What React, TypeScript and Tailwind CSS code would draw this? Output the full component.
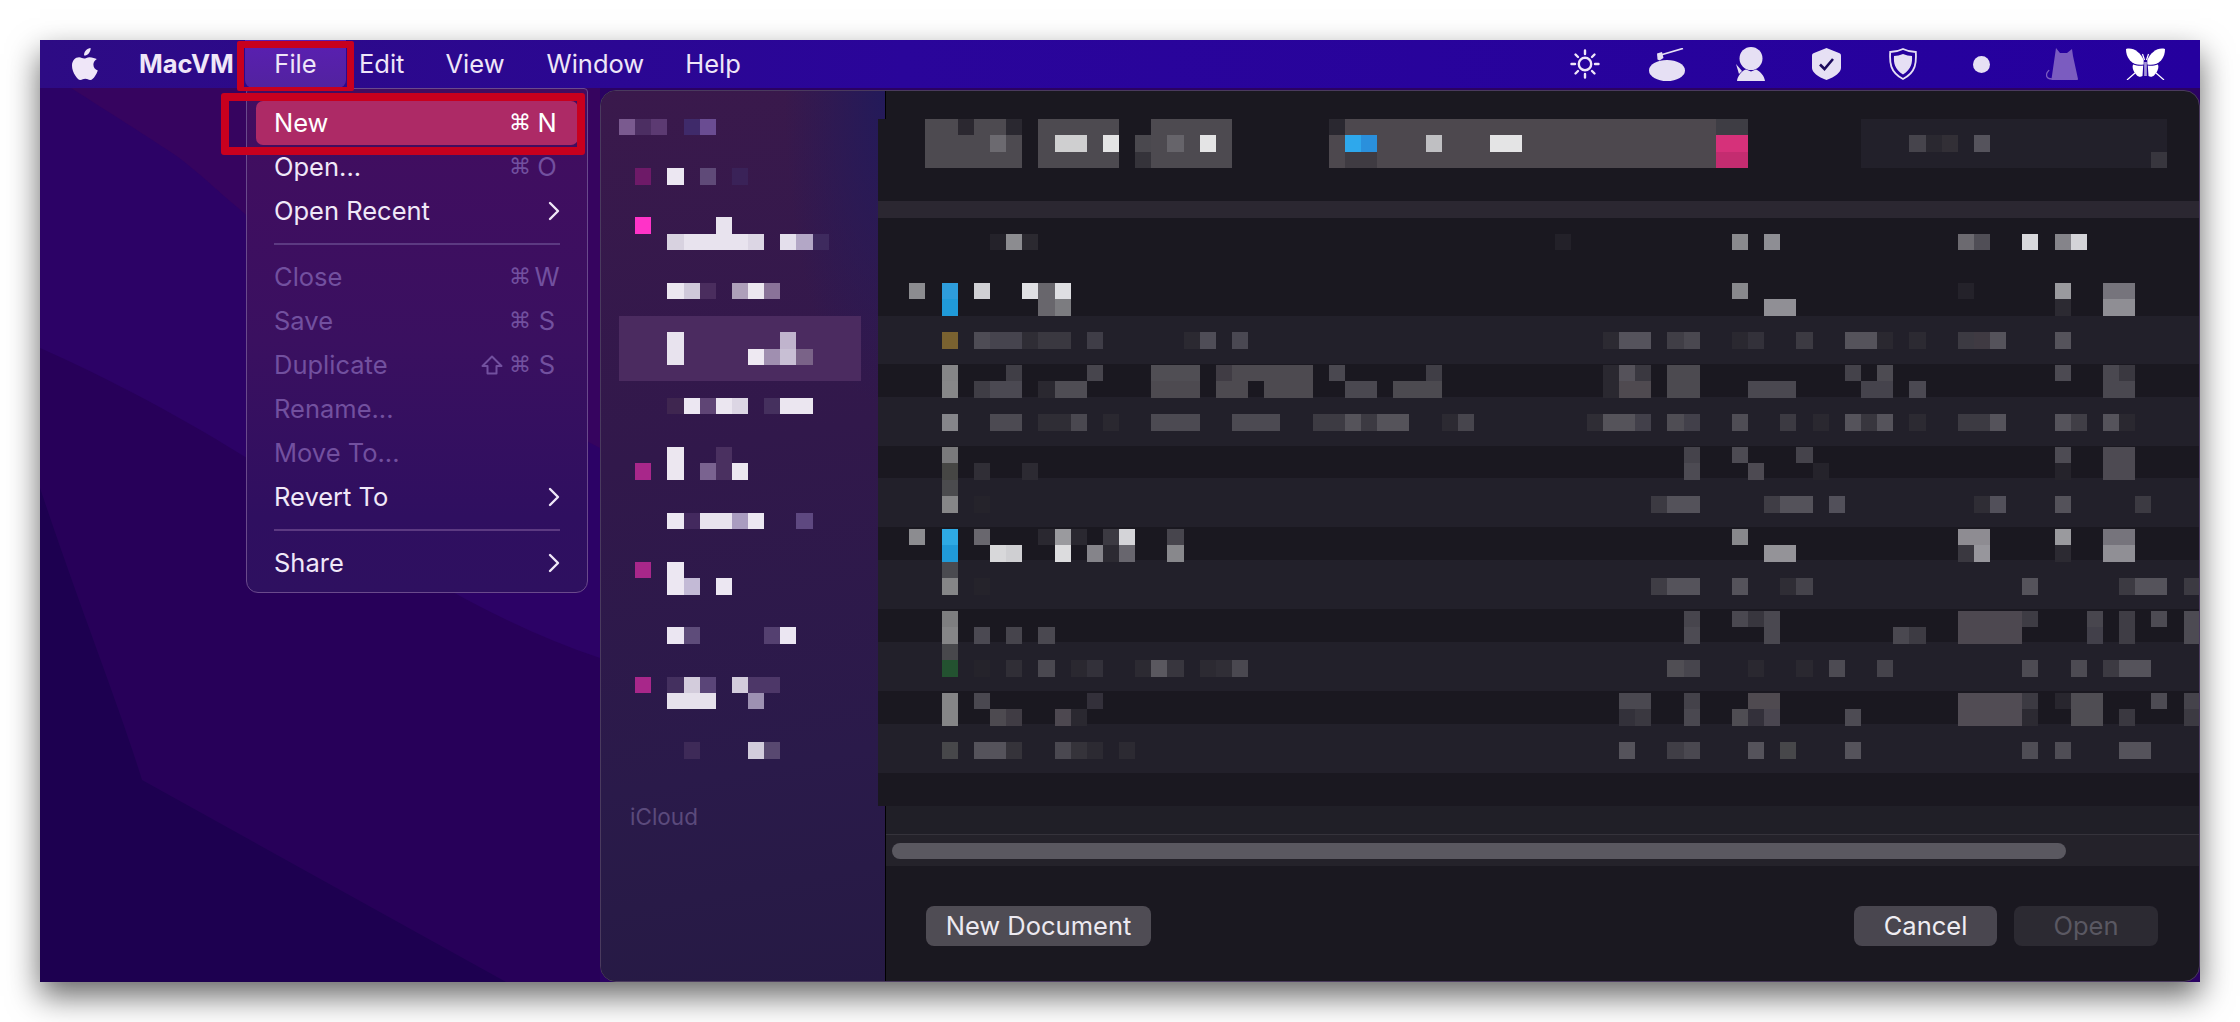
import React from "react";

const SANS = "font-['Inter','Liberation_Sans',sans-serif]";

// Pixelated (censored) blocks of the reference: row -> "col[-col]:hex" list.
const MOSAIC: [number, string][] = [
  // sidebar
  [0, "0:7a5a8f 1:4c2e62 2:5c3a72 4:3f2a6a 5:6a4c92"],
  [3, "1:6e1a68 3:ece7f2 5:5f4a78 7:3a2258"],
  [6, "1:ff33c8 6:e8e3ee"],
  [7, "3:d8d2e0 4-7:e8e3ee 8:dcd6e4 10:e4dfec 11:b3a7c6 12:3e2a5e"],
  [10, "3:ebe6f0 4:cfc8da 5:4a2d5e 7:ae9fba 8:ece7f0 9:8a7399"],
  [13, "3:e8e3ee 10:c0b4cd"],
  [14, "3:e8e3ee 8:eee9f2 9:a08fb0 10:c8bfd4 11:7a6388"],
  [17, "3:3f2650 4:ece7f2 5:5f4575 6:ebe6f0 7:dcd6e4 9:45305e 10-11:ebe6f0"],
  [20, "3:ece7f0 6:4a3060"],
  [21, "1:a8278a 3:ece7f0 5:7a6390 6:4a3060 7:ece7f0"],
  [24, "3:ece7f2 4:43295e 5-6:e8e3ee 7:a99cc0 8:ece7f2 11:5e4880"],
  [27, "1:a8278a 3:ece7f2"],
  [28, "3:ece7f2 4:c3bad6 6:ece7f2"],
  [31, "3:ebe6f2 4:5e4c7a 9:544070 10:ebe6f2"],
  [34, "1:a8278a 3:44305f 4:d3ccdc 5:5a4578 7:d3ccdc 8-9:4d3768"],
  [35, "3-5:e6e1ec 8:9d91b2"],
  [38, "4:3e2a58 8:d2ccdc 9:584870"],
  // toolbar
  [0, "19-20:4d4a50 21:2b2830 22-23:4d4a50 24:2a2830 26-30:4d4a50 33-37:4d4a50 44:2a2830 45-67:4d484e 68-69:3e3d44 77-95:22202a"],
  [1, "19-22:4d4a50 23:6c6a70 24:4d4a50 26:4d4a50 27-28:cfcfd0 29:4d4a50 30:e4e4e5 32:4a484e 33:4d4a50 34:66646a 35:4d4a50 36:e4e4e5 37:4d4a50 44:4d484e 45:2ea8ec 46:2a90dc 47-49:4d484e 50:bfbfc2 51-53:4d484e 54-55:e4e4e5 56-67:4d484e 68-69:d6317a 77-79:22202a 80:46444c 81:2a2830 82:322f36 83:22202a 84:55535c 85-95:22202a"],
  [2, "19-24:4d4a50 26-30:4d4a50 32:35333a 33-37:4d4a50 44:4d484e 45-46:3f3b42 47-67:4d484e 68-69:c42c70 77-94:22202a 95:38363e"],
  // table
  [7, "23:24222a 24:8c8c90 25:2b2930 58:232129 69:8a8a8e 71:8e8e94 83:6c6a70 84:504e56 87:d8d8dc 89:85848a 90:d4d4d8"],
  [10, "18:8c8c90 20:2e9ddc 22:d0d0d4 25:e0e0e4 26:68666c 27:dedee2 69:88888c 83:24222a 89:9a9a9e 92-93:76747c"],
  [11, "20:209ad8 26:68666c 27:7c7c80 71-72:908f95 89:2c2a32 92-93:8f8e94"],
  [13, "20:7a6230 22:4e4c55 23-24:46444e 25:2f2d35 26-27:3a3840 29:3f3d47 35:2b2931 36:4f4d57 38:4a4852 61:2c2a32 62-63:55535c 65:403e46 66:4a4850 69:2a2830 70:33313a 73:3c3a42 76-77:55535b 78:2a2830 80:2c2a32 83:3c3a42 84:3f3a42 85:55535b 89:55535b"],
  [15, "20:858587 24:403e46 29:47454d 33-35:504e54 37:403c44 38-42:4d4a50 44:4a4850 50:403e46 61:2a2830 62:55525a 63:3a3840 65-66:4c4a50 76:44424a 78:4d4b52 89:4c4a52 92:4a4850 93:3a3840"],
  [16, "20:878789 22:3f3d45 23-24:4b4952 26:2a2830 27-28:4f4d54 33-35:4d4a50 37-38:4d4a50 40-42:4d4a50 45-46:4a4850 48-50:4c4a50 61:2a2830 62-63:4f4a50 65-66:4c4a50 70-72:4a4850 77-78:45434c 80:4b4952 92-93:4a4850"],
  [18, "20:85858a 23-24:4c4a52 26-27:2f2d35 28:4a4850 30:2a2830 33-35:4c4a52 38-40:4c4a52 43-44:3d3b43 45:55535a 46:3c3a42 47-48:55535a 51:2c2a32 52:47454d 60:2f2d35 61-62:55535a 63:42404a 65:4f4d54 66:42404a 69:4f4d55 72:3c3a42 74:2a2830 76:55535b 77:38363e 78:55535b 80:2c2a32 83-84:3c3a42 85:55535b 89:55535b 90:403e46 92:55535b 93:2a2830"],
  [20, "20:7a7a7c 66:45434b 69:4d4b53 73:45434b 89:4d4b53 92-93:4d4a52"],
  [21, "20:464644 22:302e36 25:2c2a32 66:4d4b53 70:4d4a52 74:25232b 89:25232b 92-93:4d4a52"],
  [22, "20:4b4b4e"],
  [23, "20:868688 22:25232b 64:3c3a42 65-66:54525a 71:3f3d45 72-73:54525a 75:52505a 84:2f2d35 85:52505a 89:54525a 94:3c3a42"],
  [25, "18:8c8c90 20:2eaae4 22:69676e 26:2a2830 27:9a9a9e 28:2a2830 30:3c3a42 31:d4d4d8 34:47454d 69:88888c 83-84:8e8c92 89:9a9a9e 92-93:76747c"],
  [26, "20:209ad8 23:d8d8da 24:cfcfd2 27:dcdcde 29:85848a 30:2c2a32 31:68666e 34:88888c 71-72:949398 83:3a3840 84:97969c 89:2c2a32 92-93:908f95"],
  [27, "20:4a4a50"],
  [28, "20:858587 22:25232b 64:3f3d45 65-66:55535b 69:55535b 72:2f2d35 73:45434b 87:55535b 93:3c3a42 94-95:55535b 97-98:3c3a42"],
  [30, "20:7e7e80 66:47454d 69:4a4850 70:38363e 71:4a4850 83-86:4d4850 87:3e3c44 91:48464e 93:3f3d45 95:4d4b53 97:4d4b53"],
  [31, "20:858587 22:4b4952 24:46444c 26:4a4850 66:4d4b53 71:4a4850 79:4a4850 80:3d3b43 83-86:4d4850 91:42404a 93:3f3d45 97:4d4b53"],
  [32, "20:48484c"],
  [33, "20:235230 22:25232b 24:302e36 26:4a4850 28:2a2830 29:33313a 32:2c2a32 33:5a585f 34:38363e 36:2c2a32 37:302e36 38:4a4850 65:504e54 66:47454d 70:2a2830 73:2a2830 75:4d4b53 78:45434b 87:4d4b53 90:4d4b53 92:3c3a42 93-94:55535b"],
  [35, "20:858587 22:4a4850 29:33303a 62-63:4a4850 66:44424a 70-71:4f4a50 83-86:514c54 87:3c3a42 89:28262e 90-91:4f4d53 95:4d4b53 97:45434b"],
  [36, "20:858587 23:4d4a50 24:403c44 27:4d4850 28:2a2830 62:33313a 63:3a3840 66:4a4850 69:4f4d53 70:33303a 71:4a4650 76:4d4b53 83-86:514c54 87:2c2a32 90-91:4f4d53 93:3a3840 97:3c3a42"],
  [38, "20:47474a 22-23:55535b 24:35333a 27:4a4850 28:35333a 29:2c2a32 31:2c2a32 62:55535b 65:403e46 66:4a4850 70:55535b 72:47474a 76:55535b 87:4f4d55 89:4f4d55 93-94:55535b"],
];

function Mosaic() {
  const rects: React.ReactNode[] = [];
  MOSAIC.forEach(([row, spec], i) => {
    spec.split(" ").forEach((part, j) => {
      const [range, hex] = part.split(":");
      const [a, b] = range.split("-").map(Number);
      const end = b === undefined ? a : b;
      const x = 619 + a * 16.13;
      const right = Math.min(x + (end - a + 1) * 16.13, 2199);
      rects.push(<rect key={`${i}-${j}`} x={x} y={119 + row * 16.4} width={right - x} height={16.4} fill={`#${hex}`} />);
    });
  });
  return (
    <svg className="absolute left-0 top-0 pointer-events-none" width={2240} height={1022} viewBox="0 0 2240 1022" shapeRendering="crispEdges">
      {rects}
    </svg>
  );
}

const Apple = () => (
  <svg width="26" height="32" viewBox="0 0 26 32" fill="#efe6f8">
    <path d="M18.6 0c.2 2-.6 3.900-1.700 5.200-1.200 1.400-3 2.500-4.800 2.400-.3-1.900.6-3.900 1.700-5.100C15 1.100 17 .1 18.600 0zM24.800 11c-2.300 1.400-3.400 3.200-3.400 5.600 0 2.800 1.600 4.900 4.400 6-.7 2-1.600 3.800-2.900 5.600-1.400 1.900-2.700 3.800-4.700 3.800-2 0-2.600-1.200-4.900-1.200-2.300 0-3 1.200-4.900 1.200-2 0-3.400-2.100-4.800-4.100C1.200 24.700 0 20.900 0 17.700 0 12.600 3.300 9.300 7.100 9.300c2 0 3.700 1.300 5 1.300 1.200 0 3.100-1.400 5.400-1.400 2.900 0 5.400 1.100 7.300 1.800z" />
  </svg>
);

const Sun = () => (
  <svg width="30" height="30" viewBox="0 0 30 30" fill="none" stroke="#efe6f8" strokeWidth="2.400" strokeLinecap="round">
    <circle cx="15" cy="15" r="6.200" />
    <path d="M15 1.500v3.500M15 25v3.500M1.500 15H5M25 15h3.500M5.500 5.500L8 8M22 22l2.500 2.500M5.500 24.500L8 22M22 8l2.500-2.500" />
  </svg>
);

const Honey = () => (
  <svg width="36" height="33" viewBox="0 0 36 33" fill="#e6e0f4">
    <ellipse cx="18" cy="22.500" rx="18" ry="10.500" />
    <path d="M10 7.500L34 0.500" stroke="#e6e0f4" strokeWidth="1.800" fill="none" />
    <path d="M8 5.500l5-1.500 1.500 6-4 2.500-2-1z" />
  </svg>
);

const Person = () => (
  <svg width="29" height="34" viewBox="0 0 29 34" fill="#e6e0f4">
    <circle cx="15" cy="11.500" r="11.500" />
    <path d="M1 34c.5-5 5-10.500 9-11.500l5 2 5-2c4 1.500 8.500 6.500 9 11.500z" />
    <path d="M0 17l6 7-3 3z" />
  </svg>
);

const ShieldCheck = () => (
  <svg width="29" height="32" viewBox="0 0 29 32" fill="none">
    <path d="M14.500 0L27 5c1.500.6 2 1.200 2 3v12c0 4-6 9-14.500 12C6 29 0 24 0 20V8c0-1.800.5-2.400 2-3z" fill="#e6e0f4" />
    <path d="M8 16.500l4.500 4.500L21 11" stroke="#1c0a5c" strokeWidth="2.600" />
  </svg>
);

const ShieldOutline = () => (
  <svg width="28" height="32" viewBox="0 0 28 32" fill="none">
    <path d="M14 1c4 2 8 3 12.800 3 .6 10 .6 20-12.800 27C.6 24 .6 14 1.200 4 6 4 10 3 14 1z" stroke="#e6e0f4" strokeWidth="1.800" />
    <path d="M14 6c3 1.200 6 2 9 2 .4 7-.4 13-9 18.500C5.400 21 4.600 15 5 8c3 0 6-.8 9-2z" fill="#e6e0f4" />
  </svg>
);

const Cat = () => (
  <svg width="32" height="32" viewBox="0 0 32 32" fill="#7b5cc0">
    <path d="M10 0l4 5h7l5-4 1 7 5 23c0 .6-.5 1-1 1H6.500c-.5 0-1-.4-1-1z" />
    <path d="M6 31c-3 0-5.500-1-5.500-4s2-3.500 2.500-5" fill="none" stroke="#7b5cc0" strokeWidth="1.300" />
  </svg>
);

const Butterfly = () => (
  <svg width="41" height="32" viewBox="0 0 41 32" fill="#ffffff">
    <path d="M1 1C8-1 15 4 18.700 12V16.500C13 17.500 8 16 5 12.500 2 9 1 5 1 1z" />
    <path d="M40 1C33-1 26 4 22.300 12V16.500C28 17.500 33 16 36 12.500 39 9 40 5 40 1z" />
    <path d="M8 16.500C12 18 16 18 18.200 17.500L17.500 28C15.500 29.500 13 28.500 12 27.500L9.500 24.500C8 22 7 19 8 16.500z" />
    <path d="M33 16.500C29 18 25 18 22.800 17.500L23.500 28C25.500 29.500 28 28.500 29 27.500L31.500 24.500C33 22 34 19 33 16.500z" />
    <path d="M19.500 14h.8v14h-.8zM20.700 14h.8v14h-.8z" />
    <path d="M10 25L2 32M31 25l8 7M19.500 12L17.500 6M21.500 12L23.500 6" stroke="#ffffff" strokeWidth="1.200" fill="none" />
  </svg>
);

const Chevron = () => (
  <svg width="12" height="20" viewBox="0 0 12 20" fill="none" stroke="#f0e8f8" strokeWidth="2.400" strokeLinecap="round" strokeLinejoin="round">
    <path d="M2 2l8 8-8 8" />
  </svg>
);

const ShiftIcon = () => (
  <svg width="22" height="20" viewBox="0 0 22 20" fill="none" stroke="#72509f" strokeWidth="2" strokeLinejoin="round">
    <path d="M11 1.500L20.500 11H15.500V18.500H6.500V11H1.500z" />
  </svg>
);

function Shortcut({ k, shift, tone }: { k: string; shift?: boolean; tone: string }) {
  return (
    <span className={`flex items-center ${tone}`}>
      {shift && <span className="mr-[6px]"><ShiftIcon /></span>}
      <span className="font-['DejaVu_Sans',sans-serif] text-[22px] leading-none">⌘</span>
      <span className="w-[26px] text-center ml-[3px]">{k}</span>
    </span>
  );
}

const ON = "text-[#f0e8f8]";
const OFF = "text-[#72509f]";

function Item({ label, off, children, active }: { label: string; off?: boolean; active?: boolean; children?: React.ReactNode }) {
  return (
    <div className={`flex h-[44px] items-center justify-between mx-[9px] px-[18px] rounded-[7px] ${active ? "bg-[#ad2a66] text-white" : off ? OFF : ON}`}>
      <span>{label}</span>
      {children}
    </div>
  );
}

const Sep = () => (
  <div className="flex h-[22px] items-center px-[27px]">
    <div className="h-[2px] w-full bg-[#5c3a82]" />
  </div>
);

function Menu() {
  return (
    <div className={`absolute left-[206px] top-[48px] w-[342px] h-[505px] pt-[12px] rounded-b-[12px] rounded-t-[4px] border border-[#6a4a8c] bg-[linear-gradient(180deg,#420d60_0%,#3a1060_50%,#2f0f60_85%,#2e1060_100%)] text-[25.5px] leading-none ${SANS}`}>
      <Item label="New" active>
        <Shortcut k="N" tone="text-white" />
      </Item>
      <Item label="Open...">
        <Shortcut k="O" tone={OFF} />
      </Item>
      <Item label="Open Recent">
        <Chevron />
      </Item>
      <Sep />
      <Item label="Close" off>
        <Shortcut k="W" tone={OFF} />
      </Item>
      <Item label="Save" off>
        <Shortcut k="S" tone={OFF} />
      </Item>
      <Item label="Duplicate" off>
        <Shortcut k="S" shift tone={OFF} />
      </Item>
      <Item label="Rename..." off />
      <Item label="Move To..." off />
      <Item label="Revert To">
        <Chevron />
      </Item>
      <Sep />
      <Item label="Share">
        <Chevron />
      </Item>
    </div>
  );
}

function MenuBar() {
  return (
    <div className={`relative z-10 flex h-[48px] shrink-0 items-center bg-[linear-gradient(90deg,#2d0b84_0%,#2a059a_40%,#25009e_100%)] text-[25.5px] text-[#efe6f8] ${SANS}`}>
      <span className="ml-[32px] w-[67px]"><Apple /></span>
      <span className="font-bold w-[93px]">MacVM</span>
      <span className="ml-[13px] flex h-[48px] w-[101px] items-center justify-center rounded-b-[8px] bg-[linear-gradient(180deg,#5a1fb2,#52229f)]">File</span>
      <span className="ml-[13px]">Edit</span>
      <span className="ml-[41px]">View</span>
      <span className="ml-[42px]">Window</span>
      <span className="ml-[41px]">Help</span>
      <div className="ml-auto mr-[34px] flex items-center">
        <Sun />
        <span className="ml-[49px]"><Honey /></span>
        <span className="ml-[51px]"><Person /></span>
        <span className="ml-[47px]"><ShieldCheck /></span>
        <span className="ml-[48px]"><ShieldOutline /></span>
        <span className="ml-[56px] h-[17px] w-[17px] rounded-full bg-[#e6e0f4]" />
        <span className="ml-[56px]"><Cat /></span>
        <span className="ml-[47px]"><Butterfly /></span>
      </div>
    </div>
  );
}

const ROWS: [number, string][] = [
  [48, "bg-[#22202a]"], [33, "bg-[#1a1820]"], [49, "bg-[#22202a]"], [32, "bg-[#1a1820]"],
  [49, "bg-[#22202a]"], [33, "bg-[#1a1820]"], [49, "bg-[#22202a]"], [33, "bg-[#1a1820]"],
  [49, "bg-[#22202a]"], [33, "bg-[#1a1820]"], [49, "bg-[#22202a]"], [33, "bg-[#1a1820]"],
];

const ROW_H: Record<number, string> = { 48: "h-[48px]", 33: "h-[33px]", 49: "h-[49px]", 32: "h-[32px]" };

function Dialog() {
  return (
    <div className="flex h-[892px] w-[1600px] overflow-hidden rounded-[16px] border border-[#4a3a5e] bg-[#1a1820]">
      <div className="relative flex w-[284px] shrink-0 flex-col bg-[radial-gradient(ellipse_at_100%_0%,#231a5a_0%,transparent_25%),linear-gradient(170deg,#3a194c_0%,#31184b_40%,#2a1a4a_75%,#261a44_100%)]">
        <div className="absolute left-[18px] top-[225px] h-[65px] w-[242px] bg-[#4b2b60]" />
        <span className={`mt-[709px] ml-[29px] text-[22.5px] text-[#5b4a7c] ${SANS}`}>iCloud</span>
      </div>
      <div className="relative flex min-w-0 flex-1 flex-col border-l border-black">
        <div className="h-[28px]" />
        <div className="-ml-[8px] flex flex-col bg-[#1a1820]">
          <div className="h-[82px]" />
          <div className="h-[17px] bg-[#2b2731]" />
          <div className="h-[98px]" />
          {ROWS.map(([h, bg], i) => (
            <div key={i} className={`${ROW_H[h]} ${bg}`} />
          ))}
        </div>
        <div className="h-[28px] bg-[#201f27]" />
        <div className="h-px bg-[#35333b]" />
        <div className="flex h-[31px] items-center bg-[#24222a] pl-[6px]">
          <div className="h-[16px] w-[1174px] rounded-full bg-[#5a5860]" />
        </div>
        <div className={`flex flex-1 items-start justify-between pl-[40px] pr-[41px] pt-[40px] text-[25.5px] ${SANS}`}>
          <button className="flex h-[40px] w-[225px] items-center justify-center rounded-[8px] bg-[#4f4c54] text-[#ece9f0]">New Document</button>
          <div className="flex gap-[17px]">
            <button className="flex h-[40px] w-[143px] items-center justify-center rounded-[8px] bg-[#49464f] text-[#efedf2]">Cancel</button>
            <button className="flex h-[40px] w-[144px] items-center justify-center rounded-[8px] bg-[#2c2a32] text-[#5a5862]">Open</button>
          </div>
        </div>
      </div>
    </div>
  );
}

export default function App() {
  return (
    <div className="relative h-[1022px] w-[2240px] overflow-hidden bg-white p-[40px]">
      <div className="relative flex h-[942px] w-[2160px] flex-col bg-[#2a0262] shadow-[0_14px_30px_rgba(0,0,0,0.6)]">
        <svg className="absolute left-0 top-[48px]" width="560" height="894" viewBox="0 0 560 894">
          <rect width="560" height="894" fill="#2c0266" />
          <path d="M31 0C70 25 110 50 138 69 165 90 180 105 197 119 300 210 440 300 560 360V0z" fill="#36045f" />
          <path d="M0 260C90 300 200 360 280 420 380 490 470 540 560 570V894H0z" fill="#270059" />
          <path d="M0 400C40 520 80 620 102 692L466 894H0z" fill="#1d0050" />
        </svg>
        <MenuBar />
        <div className="relative flex flex-1 pl-[560px] pt-[2px]">
          <Dialog />
        </div>
        <Menu />
        <div className="absolute left-[197px] top-[1px] z-20 h-[50px] w-[117px] rounded-[2px] border-[7px] border-b-[4px] border-[#c8001e]" />
        <div className="absolute left-[181px] top-[53px] z-20 h-[62px] w-[364px] rounded-[3px] border-[8px] border-[#c8001e]" />
      </div>
      <Mosaic />
    </div>
  );
}
